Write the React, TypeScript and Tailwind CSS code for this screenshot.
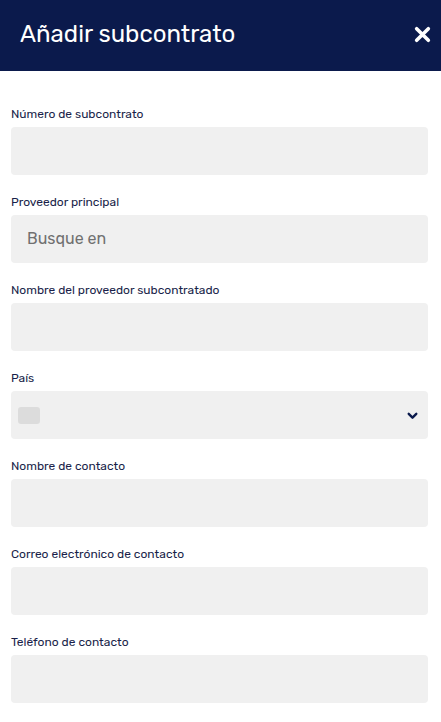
import React from 'react';

interface Field {
  label: string;
  placeholder?: string;
  country?: boolean;
}

const fields: Field[] = [
  { label: 'Número de subcontrato' },
  { label: 'Proveedor principal', placeholder: 'Busque en' },
  { label: 'Nombre del proveedor subcontratado' },
  { label: 'País', country: true },
  { label: 'Nombre de contacto' },
  { label: 'Correo electrónico de contacto' },
  { label: 'Teléfono de contacto' },
];

export default function App() {
  return (
    <div className="w-[441px] h-[722px] bg-white overflow-hidden" style={{ fontFamily: 'Rubik, Inter, "Noto Sans", sans-serif' }}>
      <div className="h-[71px] bg-[#0b1a4c] flex items-center justify-between pl-5 pr-[7px] pb-[3px]">
        <h1 className="text-[24px] font-normal text-white leading-none">Añadir subcontrato</h1>
        <button className="w-6 h-6 flex items-center justify-center">
          <svg className="w-[17px] h-[17px]" viewBox="0 0 16 16" fill="none" stroke="white" strokeWidth={3.4} strokeLinecap="round">
            <path d="M2.5 2.5l11 11M13.5 2.5l-11 11" />
          </svg>
        </button>
      </div>

      <div className="pt-[35px] px-[11px] pr-[13px] flex flex-col gap-[19px]">
        {fields.map((f) => (
          <div key={f.label} className="flex flex-col gap-[5px]">
            <label className="text-[12px] leading-4 text-[#1a1f4a]">{f.label}</label>
            <div className="h-12 rounded bg-[#f0f0f0] flex items-center">
              {f.placeholder && (
                <span className="pl-4 text-[16px] text-[#707070]">{f.placeholder}</span>
              )}
              {f.country && (
                <div className="flex-1 flex items-center justify-between pl-[7px] pr-[9px]">
                  <div className="w-[22px] h-[17px] rounded-[3px] bg-[#dcdcdc]" />
                  <svg className="w-[13px] h-[13px]" viewBox="0 0 12 12" fill="none" stroke="#0b1a4c" strokeWidth={2.2} strokeLinecap="round" strokeLinejoin="round">
                    <path d="M2.5 4.5L6 8l3.5-3.5" />
                  </svg>
                </div>
              )}
            </div>
          </div>
        ))}
      </div>
    </div>
  );
}
